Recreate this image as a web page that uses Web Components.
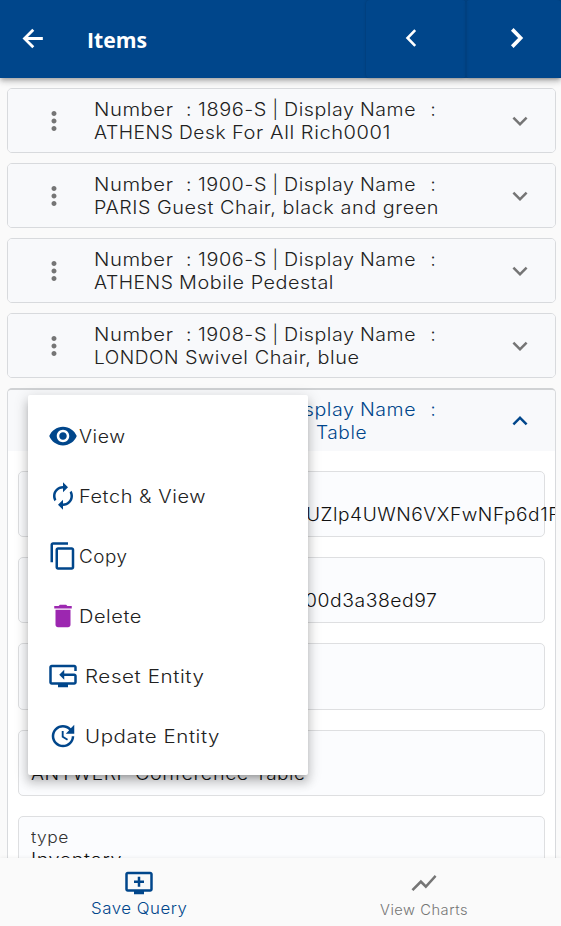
<!DOCTYPE html>
<html lang="en"><head><meta charset="utf-8"><title>Items</title>
<style>
html,body{margin:0;height:100%;overflow:hidden;background:#fafafa}
body{font-family:Inter,"Noto Sans",sans-serif;font-weight:300;color:#212121}
</style></head><body>
<items-app></items-app>
<script>
const ICONS={
back:'<path d="M20.3 12H4.2M11.8 4.2 4 12l7.8 7.8" fill="none" stroke="currentColor" stroke-width="2.5"/>',
prev:'<path d="M15.6 5.2 9 12l6.6 6.8" fill="none" stroke="currentColor" stroke-width="2.2"/>',
next:'<path d="M8.8 4.6 16 12l-7.2 7.4" fill="none" stroke="currentColor" stroke-width="3.1"/>',
more:'<path d="M12 8c1.1 0 2-.9 2-2s-.9-2-2-2-2 .9-2 2 .9 2 2 2zm0 2c-1.1 0-2 .9-2 2s.9 2 2 2 2-.9 2-2-.9-2-2-2zm0 6c-1.1 0-2 .9-2 2s.9 2 2 2 2-.9 2-2-.9-2-2-2z"/>',
down:'<path d="M16.59 8.59 12 13.17 7.41 8.59 6 10l6 6 6-6z"/>',
up:'<path d="m12 8-6 6 1.41 1.41L12 10.83l4.59 4.58L18 14z"/>',
eye:'<path d="M12 4.5C7 4.5 2.73 7.61 1 12c1.73 4.39 6 7.5 11 7.5s9.27-3.11 11-7.5c-1.73-4.39-6-7.5-11-7.5zM12 17c-2.76 0-5-2.24-5-5s2.24-5 5-5 5 2.24 5 5-2.24 5-5 5zm0-8c-1.66 0-3 1.34-3 3s1.34 3 3 3 3-1.34 3-3-1.34-3-3-3z"/>',
renew:'<path d="M12 6v3l4-4-4-4v3c-4.42 0-8 3.58-8 8 0 1.57.46 3.03 1.24 4.26L6.7 14.8c-.45-.83-.7-1.79-.7-2.8 0-3.31 2.69-6 6-6zm6.76 1.74L17.3 9.2c.44.84.7 1.79.7 2.8 0 3.31-2.69 6-6 6v-3l-4 4 4 4v-3c4.42 0 8-3.58 8-8 0-1.57-.46-3.03-1.24-4.26z"/>',
copy:'<path d="M16 1H4c-1.1 0-2 .9-2 2v14h2V3h12V1zm3 4H8c-1.1 0-2 .9-2 2v14c0 1.1.9 2 2 2h11c1.1 0 2-.9 2-2V7c0-1.1-.9-2-2-2zm0 16H8V7h11v14z"/>',
del:'<path d="M6 19c0 1.1.9 2 2 2h8c1.1 0 2-.9 2-2V7H6v12zM19 4h-3.5l-1-1h-5l-1 1H5v2h14V4z"/>',
reset:'<path d="M21 10h-8.01V7L9 11l3.99 4v-3H21v5H3V5h18v3h2V5c0-1.1-.9-2-2-2H3c-1.1 0-2 .9-2 2v12c0 1.1.9 2 2 2h5v2h8v-2h5c1.1 0 2-.9 2-2v-5c0-1.1-.9-2-2-2z"/>',
update:'<path d="M21 10.12h-6.78l2.74-2.82c-2.73-2.7-7.15-2.8-9.88-.1-2.73 2.71-2.73 7.08 0 9.79s7.15 2.71 9.88 0C18.32 15.65 19 14.08 19 12.1h2c0 1.98-.88 4.55-2.64 6.29-3.51 3.48-9.21 3.48-12.72 0-3.5-3.47-3.53-9.11-.02-12.58s9.14-3.47 12.65 0L21 3v7.12zM12.5 8v4.25l3.5 2.08-.72 1.21L11 13V8h1.5z"/>',
queue:'<path d="M21 3H3c-1.11 0-2 .89-2 2v12c0 1.1.89 2 2 2h5v2h8v-2h5c1.1 0 1.99-.9 1.99-2L23 5c0-1.11-.9-2-2-2zm0 14H3V5h18v12zm-5-7v2h-3v3h-2v-3H8v-2h3V7h2v3h3z"/>',
chart:'<path d="m3.5 18.49 6-6.01 4 4L22 6.92l-1.41-1.41-7.09 7.97-4-4L2 16.99z"/>'
};
class Base extends HTMLElement{
  connectedCallback(){ if(!this.shadowRoot) this.attachShadow({mode:'open'}).innerHTML=this.view(); if(this.ready) this.ready(); }
  a(n){ return this.getAttribute(n)||''; }
}
customElements.define('app-icon',class extends Base{
  view(){const s=this.a('size')||30;return `<style>:host{display:block;flex:none;width:${s}px;height:${s}px}svg{display:block;fill:currentColor}</style><svg width="${s}" height="${s}" viewBox="0 0 24 24">${ICONS[this.a('name')]}</svg>`;}
});
/* Text run widened so that its advance equals the w attribute. */
customElements.define('fit-text',class extends Base{
  view(){return `<style>:host{display:inline-block;white-space:pre;vertical-align:top}span{display:inline-block;transform-origin:0 50%;letter-spacing:${this.a('track')||'.5px'}}</style><span><slot></slot></span>`;}
  ready(){
    const w=parseFloat(this.a('w')), s=this.shadowRoot.querySelector('span'), n=s.getBoundingClientRect().width;
    if(w&&n){ s.style.transform=`scaleX(${w/n})`; this.style.width=w+'px'; }
  }
});
customElements.define('app-header',class extends Base{
  view(){return `<style>:host{display:flex;height:78px;flex:none;background:#00468b;color:#fff;position:relative;z-index:2;box-shadow:0 2px 4px -1px rgba(0,0,0,.2),0 4px 5px rgba(0,0,0,.14),0 1px 10px rgba(0,0,0,.12)}
  .l{flex:1;display:flex;align-items:center;padding:0 0 0 19.5px;gap:40.5px;box-sizing:border-box}.l app-icon{margin-top:-2px}
  b{font:700 22px/30px "Open Sans","Noto Sans",sans-serif;padding-bottom:1px}
  .n{box-sizing:border-box;display:flex;align-items:center;justify-content:center;height:78px;padding-bottom:2px;border-radius:4px;box-shadow:0 0 3px rgba(0,0,0,.22)}
  .p{width:100px;padding-right:9px}.x{width:95.5px;padding-left:5px}</style>
  <div class="l"><app-icon name="back" size="27"></app-icon><b><fit-text track="0px" w="60">Items</fit-text></b></div><div class="n p"><app-icon name="prev" size="28"></app-icon></div><div class="n x"><app-icon name="next" size="28"></app-icon></div>`;}
});
customElements.define('item-row',class extends Base{
  view(){const o=this.hasAttribute('open');return `<style>:host{display:block;box-sizing:border-box;border:1px solid #d8dadd;border-radius:5px;background:#f8f9fb;overflow:hidden;flex:none}
  :host([open]){border-top:2px solid #d0d2d4;background:#fff;height:600px}
  .h{display:flex;align-items:center;height:63px;background:#f8f9fb}
  :host([open]) .h{height:61px;color:#00468b}
  .h>app-icon{color:${o?'#00468b':'#757575'};flex:none}
  .m{margin-left:30.6px}.t{width:436px;padding-left:25px;font-size:18px;line-height:23px;box-sizing:border-box;flex:none;white-space:nowrap}
  .t div{height:23px}
  .b{display:flex;flex-direction:column;gap:20px;padding:20px 10px}</style>
  <div class="h"><app-icon class="m" name="more"></app-icon><div class="t"><div><fit-text w="92">Number  </fit-text><fit-text w="12">: </fit-text><fit-text w="69">${this.a('no')}</fit-text><fit-text w="17"> | </fit-text><fit-text w="76.5">Display </fit-text><fit-text w="56">Name</fit-text><fit-text w="14">  </fit-text>:</div><div><slot></slot></div></div><app-icon name="${o?'up':'down'}"></app-icon></div>${o?'<div class="b"><slot name="fields"></slot></div>':''}`;}
});
customElements.define('item-field',class extends Base{
  view(){return `<style>:host{display:flex;flex-direction:column;box-sizing:border-box;height:66.2px;flex:none;border:1px solid #dedfe1;border-radius:5px;background:#fbfcfe;padding:9px 11.4px 0;white-space:nowrap;color:#111}
  .l{height:22px;line-height:23px;font-size:16px;color:#333}.v{height:23px;line-height:23px;font-size:18px;padding-left:var(--indent,0)}</style><div class="l"><slot name="label"></slot></div><div class="v"><slot></slot></div>`;}
});
customElements.define('menu-item',class extends Base{
  view(){return `<style>:host{display:flex;align-items:center;height:60px;font-size:18px;line-height:24px;padding-left:20px}app-icon{color:${this.a('color')||'#00468b'}}span{padding-top:2px;padding-left:${this.a('gap')||.5}px}</style><app-icon name="${this.a('icon')}"></app-icon><span><slot></slot></span>`;}
});
customElements.define('context-menu',class extends Base{
  view(){return `<style>:host{display:block;position:absolute;left:28px;top:395px;width:280px;height:380px;box-sizing:border-box;padding:11px 0;background:#fff;border-radius:2px;z-index:5;box-shadow:0 5px 5px -3px rgba(0,0,0,.2),0 8px 10px 1px rgba(0,0,0,.14),0 3px 14px 2px rgba(0,0,0,.12)}</style><slot></slot>`;}
});
customElements.define('bottom-nav',class extends Base{
  view(){return `<style>:host{display:flex;height:68px;flex:none;background:#fafafa;position:relative;z-index:2;box-shadow:0 0 4px rgba(0,0,0,.08)}
  div{display:flex;flex-direction:column;align-items:center;box-sizing:border-box;flex:none}
  .s{width:278px;padding-top:10px;color:#00468b;font-size:16px}.v{width:291px;padding-top:10px;color:#757575;font-size:14px}
  .s fit-text{line-height:20px}.v fit-text{line-height:20px;margin-top:2px}</style>
  <div class="s"><app-icon name="queue"></app-icon><fit-text w="96.5">Save Query</fit-text></div><div class="v"><app-icon name="chart"></app-icon><fit-text w="88">View Charts</fit-text></div>`;}
});
customElements.define('items-app',class extends Base{
  view(){return `<style>:host{display:flex;flex-direction:column;width:561px;height:926px;position:relative;overflow:hidden}
  main{flex:1;min-height:0;overflow:hidden;display:flex;flex-direction:column;gap:10px;padding:10px 5.4px 0 7.4px;box-sizing:border-box}</style>
  <app-header></app-header>
  <main>
  <item-row no="1896-S"><fit-text w="85.5">ATHENS </fit-text><fit-text w="53">Desk </fit-text><fit-text w="159">For All Rich0001</fit-text></item-row>
  <item-row no="1900-S"><fit-text w="63">PARIS </fit-text><fit-text w="282">Guest Chair, black and green</fit-text></item-row>
  <item-row no="1906-S"><fit-text w="85.5">ATHENS </fit-text><fit-text w="155">Mobile Pedestal</fit-text></item-row>
  <item-row no="1908-S"><fit-text w="91">LONDON </fit-text><fit-text w="174.5">Swivel Chair, blue</fit-text></item-row>
  <item-row open no="1920-S"><fit-text w="103">ANTWERP </fit-text><fit-text w="110">Conference</fit-text><fit-text w="9.5"> </fit-text><fit-text w="51">Table</fit-text>
    <item-field slot="fields" style="--indent:275px"><fit-text w="254">UZlp4UWN6VXFwNFp6d1F</fit-text></item-field>
    <item-field slot="fields" style="--indent:274px"><fit-text w="132.5">00d3a38ed97</fit-text></item-field>
    <item-field slot="fields"></item-field>
    <item-field slot="fields"><fit-text w="104">ANTWERP </fit-text><fit-text w="120">Conference </fit-text><fit-text w="50.5">Table</fit-text></item-field>
    <item-field slot="fields"><fit-text slot="label" w="38">type</fit-text><fit-text w="91">Inventory</fit-text></item-field>
  </item-row>
  </main>
  <bottom-nav></bottom-nav>
  <context-menu>
    <menu-item icon="eye"><fit-text w="46.5">View</fit-text></menu-item>
    <menu-item icon="renew"><fit-text w="127">Fetch &amp; View</fit-text></menu-item>
    <menu-item icon="copy"><fit-text w="48.5">Copy</fit-text></menu-item>
    <menu-item icon="del" color="#9c27b0"><fit-text w="63">Delete</fit-text></menu-item>
    <menu-item icon="reset" gap="6.5"><fit-text w="119.5">Reset Entity</fit-text></menu-item>
    <menu-item icon="update" gap="6.5"><fit-text w="135">Update Entity</fit-text></menu-item>
  </context-menu>`;}
});
</script>
</body></html>
